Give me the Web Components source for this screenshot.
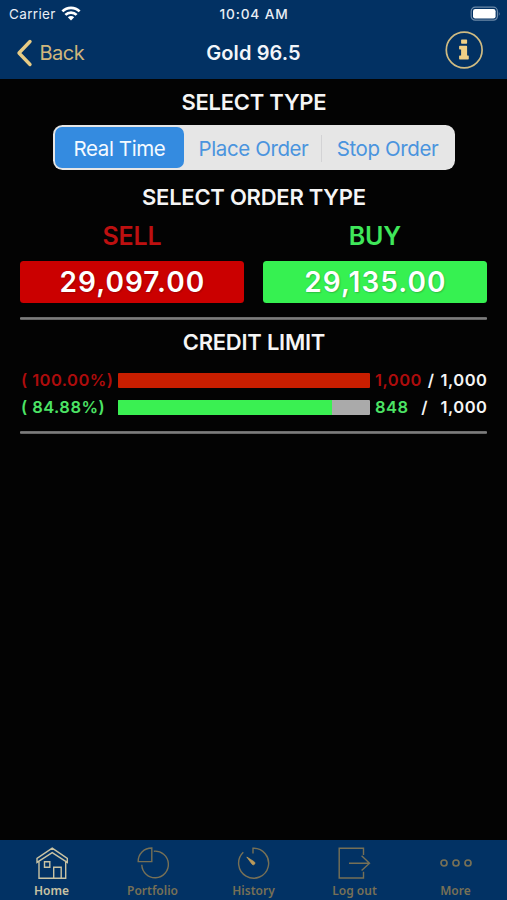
<!DOCTYPE html>
<html lang="en"><head><meta charset="utf-8"><title>Gold 96.5</title>
<style>html,body{margin:0;height:900px;background:#030303;overflow:hidden}</style></head>
<body><trade-app></trade-app>
<script>
const define = (name, html) => customElements.define(name, class extends HTMLElement {
  constructor() {
    super();
    this.attachShadow({mode: 'open'});
  }
  connectedCallback() {
    const t = document.createElement('template');
    t.innerHTML = typeof html === 'function' ? html(this) : html;
    this.shadowRoot.replaceChildren(t.content.cloneNode(true));
  }
});

define('status-bar', `<style>
:host{display:grid;grid-template-columns:1fr auto 1fr;align-items:center;height:28px;padding:0 6px 0 9px;color:#e9eef5;font-size:13.5px}
.l{display:flex;align-items:center;gap:5px;letter-spacing:.35px}
.t{font-size:13.7px;font-weight:500;letter-spacing:.85px;margin:-1px 0 0 -2px}
.b{justify-self:end;display:block;margin-top:-1px}
</style>
<div class="l"><span>Carrier</span><svg width="20" height="16" viewBox="0 0 20 16" style="margin-top:-2px"><g fill="none" stroke="#fff" stroke-width="2.7"><path d="M1.4 6.4A12.2 12.2 0 0 1 18.6 6.4"/><path d="M4.4 9.9A7.9 7.9 0 0 1 15.6 9.9"/></g><path d="M10 15.4L6.8 12.3A4.4 4.4 0 0 1 13.2 12.3Z" fill="#fff"/></svg></div>
<span class="t">10:04 AM</span>
<svg class="b" width="31" height="16" viewBox="0 0 31 16"><rect x="1.2" y="1.2" width="26.2" height="13" rx="4" fill="none" stroke="#6c89a8" stroke-width="1.2"/><rect x="3" y="3" width="22.6" height="9.4" rx="2.2" fill="#fff"/><path d="M28.8 5.4Q30.6 7.7 28.8 10Z" fill="#6c89a8"/></svg>`);

define('nav-bar', `<style>
:host{display:grid;grid-template-columns:1fr auto 1fr;align-items:center;height:51px;padding:0 23px 0 16px;box-sizing:border-box}
.back{display:flex;align-items:center;gap:7px;color:#d0b67c;font-size:20px;letter-spacing:-.5px;margin-top:-2px}
.back span{margin-left:-.5px}
h1{margin:-1px 0 0 7px;font-size:20px;font-weight:600;letter-spacing:.1px;color:#f2f5fa}
.i{justify-self:end;margin-top:-8px;display:block}
</style>
<div class="back"><svg width="17" height="28" viewBox="0 0 17 28"><path d="M14 2.5L3 14L14 25.5" fill="none" stroke="#e7cb84" stroke-width="3.4" stroke-linecap="round" stroke-linejoin="round"/></svg><span>Back</span></div>
<h1><slot></slot></h1>
<svg class="i" width="39" height="38" viewBox="0 0 39 38"><circle cx="19.2" cy="19" r="17.9" fill="none" stroke="#cfbb82" stroke-width="1.7"/><path fill="#efcf86" transform="translate(-.4 -.2)" d="M17.2 8.6h4.6q.7 0 .7.7v3q0 .7-.7.7h-4.6q-.7 0-.7-.7v-3q0-.7.7-.7ZM15.2 15h6.6q.7 0 .7.7v9h1q.7 0 .7.7v2.6q0 .7-.7.7h-8.3q-.7 0-.7-.7v-2.6q0-.7.7-.7h1.3v-6h-1.3q-.7 0-.7-.7v-2.3q0-.7.7-.7Z"/></svg>`);

define('section-title', `<style>:host{display:flex;align-items:center;justify-content:center;height:46px;font-size:22px;font-weight:600;color:#f5f5f5;letter-spacing:-.25px;white-space:nowrap}</style><slot></slot>`);

define('segment-option', `<style>
:host{display:flex;align-items:center;justify-content:center;font-size:20.5px;letter-spacing:-.4px;color:#4a94de;white-space:nowrap;border-radius:7px;padding:1px 0 0 2px;box-sizing:border-box}
:host([selected]){background:#348be0;color:#f4faff;padding-left:0}
:host([divided])::before{content:"";width:1px;height:27px;background:#d3d3d5;margin-left:-2px;margin-right:auto}
:host([divided])::after{content:"";margin-left:auto}
</style><slot></slot>`);

define('segment-control', `<style>:host{display:grid;grid-template-columns:129px 137px 1fr;box-sizing:border-box;width:402px;height:45px;padding:2px;border-radius:9.5px;background:#e6e6e6}</style><slot></slot>`);

define('price-button', `<style>
:host{display:flex;flex-direction:column;flex:1;text-align:center}
.s{height:25px;line-height:25px;font-size:25px;font-weight:600;letter-spacing:-.2px;color:var(--tone);margin:0 1px 12px 0}
.p{height:42px;line-height:42px;border-radius:3.5px;background:var(--fill);color:#fff;font-size:28px;font-weight:600;letter-spacing:1.05px;text-shadow:1px 1px 1.5px #0003,-.5px -.5px 1px #0002}
</style><div class="s"><slot name="side"></slot></div><div class="p"><slot></slot></div>`);

define('thin-rule', `<style>:host{display:block;height:3px;background:linear-gradient(#666,#7c7c7c,#595959);border-radius:1px}</style>`);

define('credit-row', e => `<style>
:host{display:grid;grid-template-columns:97.6px 252px 1fr;align-items:center;height:27px;font-size:16.5px;font-weight:600;color:#f5f5f5;white-space:nowrap}
.c,.n{margin-top:-2px}
.c{color:var(--tone);padding-left:.6px;letter-spacing:.45px}
.bar{height:15px;background:#aaa;border-radius:1px;overflow:hidden}
.fill{height:100%;width:${e.getAttribute('value')}%;background:var(--fill)}
.n{display:flex;justify-content:space-between;padding:0 0 0 5px;letter-spacing:.5px}
.n b{color:var(--tone);font-weight:600}
</style><span class="c"><slot></slot></span><div class="bar"><div class="fill"></div></div><div class="n"><b>${e.getAttribute('used')}</b><span>/</span><span>${e.getAttribute('total')}</span></div>`);

define('tab-item', `<style>
:host{display:flex;flex-direction:column;align-items:center;padding-top:6px;color:#777056;font:600 12px/18px "Noto Sans",sans-serif}
:host([active]){color:#c9c3a3}
::slotted(svg){display:block;width:34px;height:34px;fill:none;stroke:currentColor;stroke-width:1.4}
span{margin-top:2px}
</style><slot name="icon"></slot><span><slot></slot></span>`);

define('tab-bar', `<style>:host{display:grid;grid-template-columns:repeat(5,101px);height:60px;background:#023264;padding-left:1px;margin-top:auto}</style><slot></slot>`);

define('trade-app', `<style>
:host{display:flex;flex-direction:column;width:507px;height:900px;background:#030303;font-family:Inter,"Liberation Sans",sans-serif;overflow:hidden}
header{background:#023163}
main{padding:0 19.6px 0 20.4px}
segment-control{margin-left:32.6px}
.prices{display:flex;gap:19px}
.h2{height:54px;padding-bottom:1px;box-sizing:border-box}
.h3{height:45px;padding-bottom:1px;box-sizing:border-box}
.gap{margin-top:14px}
.rows{padding:2px 0 10px}
.red{--tone:#bd1010;--fill:#cb0000}.green{--tone:#3fe75a;--fill:#36f151}
.r{--tone:#ad0c0c;--fill:#c81e00}.g{--tone:#4ce465;--fill:#3af052}
</style>
<header><status-bar></status-bar><nav-bar>Gold 96.5</nav-bar></header>
<main>
<section-title>SELECT TYPE</section-title>
<segment-control><segment-option selected>Real Time</segment-option><segment-option>Place Order</segment-option><segment-option divided>Stop Order</segment-option></segment-control>
<section-title class="h2">SELECT ORDER TYPE</section-title>
<div class="prices"><price-button class="red"><span slot="side">SELL</span>29,097.00</price-button><price-button class="green"><span slot="side">BUY</span>29,135.00</price-button></div>
<thin-rule class="gap"></thin-rule>
<section-title class="h3">CREDIT LIMIT</section-title>
<div class="rows"><credit-row class="r" value="100" used="1,000" total="1,000">( 100.00%)</credit-row><credit-row class="g" value="84.88" used="848" total="1,000">( 84.88%)</credit-row></div>
<thin-rule></thin-rule>
</main>
<tab-bar>
<tab-item active><svg slot="icon" viewBox="0 0 34 34"><path d="M17.2 2.2L32.3 12.4V16.4L17.2 6.6L2 16.4V12.4ZM4 15.2V32.2H30.7V15.2M18.7 32V21.3H26.2V32M9.5 15.7H14.8V21.2H9.5Z"/></svg>Home</tab-item>
<tab-item><svg slot="icon" viewBox="0 0 34 34"><path d="M15.8 2V15.6H2.2C2 8 8 2 15.8 2ZM17.8 5.2A13.3 13.3 0 1 1 5.8 18.8"/></svg>Portfolio</tab-item>
<tab-item><svg slot="icon" viewBox="1.2 0 34 34"><path d="M17.2 7.6V2.2A15 15 0 1 1 7.5 6.3"/><path d="M11 11L18.6 15.9A1.6 1.6 0 0 1 16.4 18.3Z" fill="#bb9a5a" stroke="#bb9a5a" stroke-width=".8"/></svg>History</tab-item>
<tab-item><svg slot="icon" viewBox="1 0 34 34"><path d="M26.5 9V2.2H2.2V32H26.5V25.8M12 17.2H32.5M24.6 9.8L32.5 17.2L24.6 24.6"/></svg>Log out</tab-item>
<tab-item><svg slot="icon" viewBox="0 0 34 34"><g stroke-width="1.7"><circle cx="5" cy="17" r="3"/><circle cx="17" cy="17" r="3"/><circle cx="29" cy="17" r="3"/></g></svg>More</tab-item>
</tab-bar>`);
</script></body></html>
